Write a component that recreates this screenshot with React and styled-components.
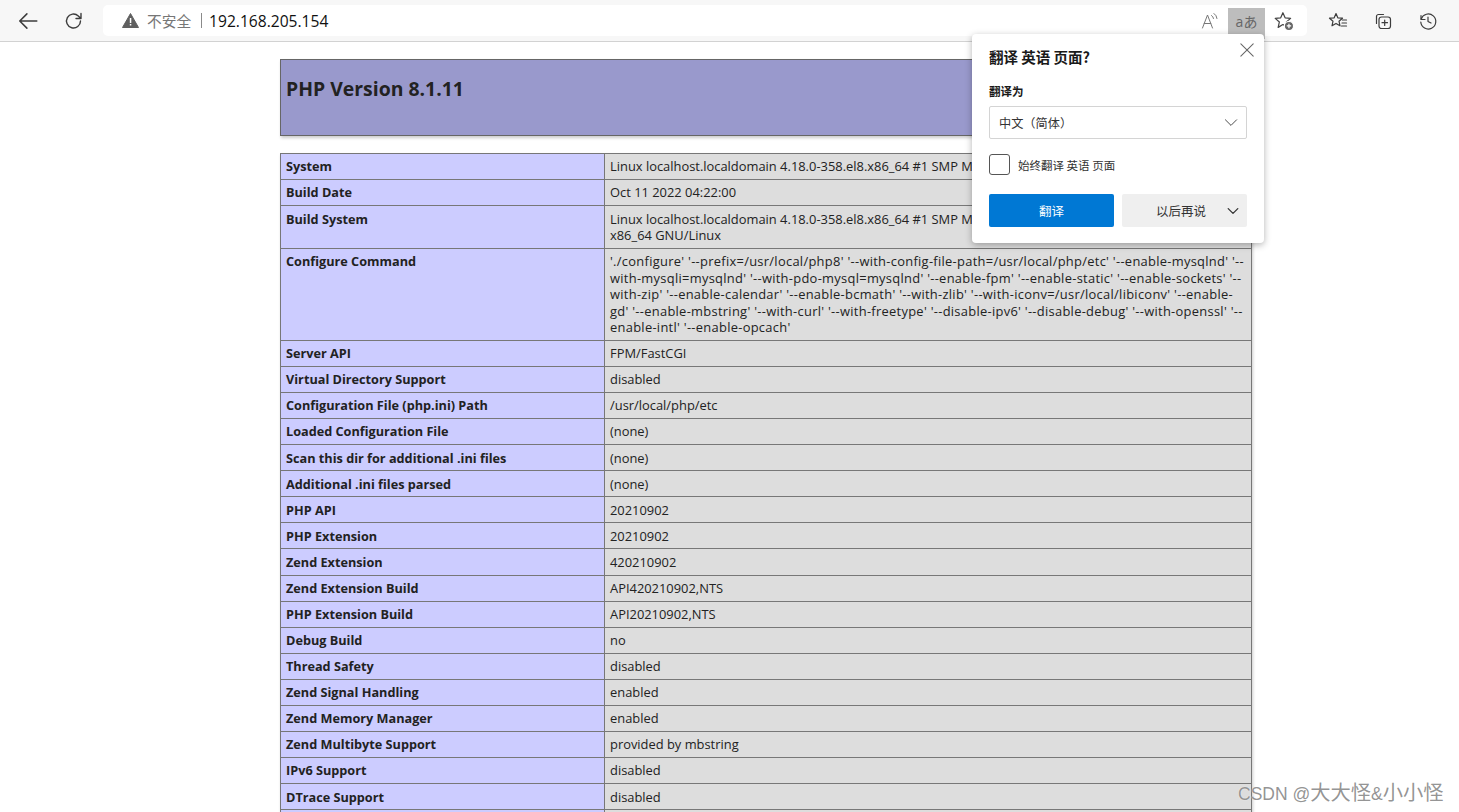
import React from "react";
import styled, { createGlobalStyle } from "styled-components";

const Global = createGlobalStyle`
  html, body { margin: 0; padding: 0; background: #fff; }
  body { font-family: "Open Sans", "Noto Sans CJK SC", sans-serif; overflow: hidden; }
  #root { height: 812px; overflow: hidden; }
`;

const Window = styled.div`
  position: relative;
  width: 1459px;
  height: 812px;
  overflow: hidden;
  background: #fff;
`;

const Toolbar = styled.header`
  height: 41px;
  display: flex;
  align-items: center;
  background: #f7f7f7;
  border-bottom: 1px solid #d2d2d2;
  padding: 0 0 0 17px;
  box-sizing: content-box;
`;

const NavButton = styled.span`
  display: flex;
  width: ${(p) => p.$w || 22}px;
  height: 22px;
  align-items: center;
  justify-content: center;
  margin-right: ${(p) => p.$mr || 0}px;
  color: #3c3c3c;
`;

const Address = styled.div`
  width: 1204px;
  height: 31px;
  margin-right: 20px;
  display: flex;
  align-items: center;
  background: #fff;
  border-radius: 5px;
  padding: 0 5px 0 19px;
  box-sizing: border-box;
`;

const Warn = styled.span`
  display: flex;
  margin-right: 8px;
`;

const Insecure = styled.span`
  font-family: "Noto Sans CJK SC", sans-serif;
  font-size: 14.7px;
  color: #767676;
`;

const Divider = styled.span`
  width: 1px;
  height: 15px;
  background: #8a8a8a;
  margin: 0 7px 0 10px;
`;

const Url = styled.span`
  font-size: 15.6px;
  color: #111;
  flex: 1;
`;

const AddrIcon = styled.span`
  width: 37px;
  height: 31px;
  margin-top: ${(p) => (p.$active ? 6 : 0)}px;
  display: flex;
  align-items: center;
  justify-content: center;
  color: #666;
  background: ${(p) => (p.$active ? "#bdbdbd" : "transparent")};
  font-size: 14px;
  padding-bottom: ${(p) => (p.$active ? 6 : 0)}px;
  box-sizing: border-box;
`;

const Main = styled.main`
  padding: 17px 0 0 280px;
`;

const Banner = styled.div`
  width: 972px;
  height: 77px;
  box-sizing: border-box;
  background: #9999cc;
  border: 1px solid #666;
  box-shadow: 1px 2px 3px #ccc;
  padding: 14px 5px;
  margin-bottom: 17px;
`;

const Title = styled.h1`
  margin: 0;
  font-size: 19.4px;
  line-height: 29px;
  font-weight: 700;
  color: #222;
`;

const InfoTable = styled.table`
  width: 972px;
  table-layout: fixed;
  border-collapse: collapse;
  box-shadow: 1px 2px 3px #ccc;
`;

const Key = styled.td`
  width: 313px;
  background: #ccccff;
  border: 1px solid #777;
  padding: 4.4px 5px 4.2px;
  font-size: 12.7px;
  line-height: 16.5px;
  font-weight: 700;
  color: #222;
  vertical-align: top;
`;

const Val = styled.td`
  background: #dddddd;
  border: 1px solid #777;
  padding: 4.4px 5px 4.2px;
  font-size: 12.9px;
  line-height: 16.5px;
  letter-spacing: ${(p) => (p.$wide ? "0.29px" : "0")};
  color: #222;
  vertical-align: top;
  white-space: nowrap;
  overflow: hidden;
`;

const Popup = styled.section`
  position: absolute;
  left: 972px;
  top: 34px;
  width: 292px;
  height: 209px;
  box-sizing: border-box;
  padding: 13px 17px 0;
  background: #fff;
  border-radius: 4px;
  box-shadow: 0 2px 7px rgba(0, 0, 0, 0.3);
  font-family: "Noto Sans CJK SC", sans-serif;
  color: #1a1a1a;
`;

const Close = styled.span`
  position: absolute;
  right: 7px;
  top: 7px;
  display: flex;
  color: #666;
`;

const PopupTitle = styled.h2`
  margin: 0 0 16px;
  font-size: 14.5px;
  line-height: 20px;
  font-weight: 700;
`;

const FieldLabel = styled.div`
  font-size: 11.5px;
  line-height: 16px;
  font-weight: 700;
  margin-bottom: 7px;
`;

const Select = styled.div`
  height: 33px;
  box-sizing: border-box;
  border: 1px solid #d4d4d4;
  border-radius: 2px;
  display: flex;
  align-items: center;
  justify-content: space-between;
  padding: 0 7px 0 9px;
  font-size: 12.2px;
  color: #333;
  margin-bottom: 15px;
`;

const CheckRow = styled.label`
  display: flex;
  align-items: center;
  gap: 8px;
  font-size: 11.5px;
  color: #333;
  margin-bottom: 19px;
`;

const Box = styled.span`
  width: 21px;
  height: 21px;
  box-sizing: border-box;
  border: 1.5px solid #555;
  border-radius: 3px;
`;

const Actions = styled.div`
  display: flex;
  gap: 8px;
`;

const Primary = styled.button`
  width: 125px;
  height: 33px;
  padding: 0;
  border: 0;
  border-radius: 2px;
  background: #0078d4;
  color: #fff;
  font: 400 12.5px "Noto Sans CJK SC", sans-serif;
`;

const Secondary = styled.button`
  width: 125px;
  height: 33px;
  padding: 0 6px 0 34px;
  border: 0;
  border-radius: 2px;
  background: #efefef;
  color: #333;
  font: 400 12.5px "Noto Sans CJK SC", sans-serif;
  display: flex;
  align-items: center;
  justify-content: space-between;
`;

const Watermark = styled.div`
  position: absolute;
  left: 1238px;
  top: 782px;
  font-family: "Liberation Sans", "Noto Sans CJK SC", sans-serif;
  font-size: 17.5px;
  line-height: 22px;
  color: rgba(120, 120, 120, 0.8);
  text-shadow: 0 0 1px #fff;
  white-space: nowrap;
`;

const Han = styled.span`
  font-size: 20.3px;
`;

const rows = [
  ["System", "Linux localhost.localdomain 4.18.0-358.el8.x86_64 #1 SMP M"],
  ["Build Date", "Oct 11 2022 04:22:00"],
  ["Build System", "Linux localhost.localdomain 4.18.0-358.el8.x86_64 #1 SMP M\nx86_64 GNU/Linux"],
  ["Configure Command", "'./configure' '--prefix=/usr/local/php8' '--with-config-file-path=/usr/local/php/etc' '--enable-mysqlnd' '--\nwith-mysqli=mysqlnd' '--with-pdo-mysql=mysqlnd' '--enable-fpm' '--enable-static' '--enable-sockets' '--\nwith-zip' '--enable-calendar' '--enable-bcmath' '--with-zlib' '--with-iconv=/usr/local/libiconv' '--enable-\ngd' '--enable-mbstring' '--with-curl' '--with-freetype' '--disable-ipv6' '--disable-debug' '--with-openssl' '--\nenable-intl' '--enable-opcach'", true],
  ["Server API", "FPM/FastCGI"],
  ["Virtual Directory Support", "disabled"],
  ["Configuration File (php.ini) Path", "/usr/local/php/etc"],
  ["Loaded Configuration File", "(none)"],
  ["Scan this dir for additional .ini files", "(none)"],
  ["Additional .ini files parsed", "(none)"],
  ["PHP API", "20210902"],
  ["PHP Extension", "20210902"],
  ["Zend Extension", "420210902"],
  ["Zend Extension Build", "API420210902,NTS"],
  ["PHP Extension Build", "API20210902,NTS"],
  ["Debug Build", "no"],
  ["Thread Safety", "disabled"],
  ["Zend Signal Handling", "enabled"],
  ["Zend Memory Manager", "enabled"],
  ["Zend Multibyte Support", "provided by mbstring"],
  ["IPv6 Support", "disabled"],
  ["DTrace Support", "disabled"],
  ["\u00a0", ""],
];

const Svg = ({ s = 20, children, sw = 1.3 }) => (
  <svg width={s} height={s} viewBox="0 0 20 20" fill="none" stroke="currentColor" strokeWidth={sw} strokeLinecap="round" strokeLinejoin="round">
    {children}
  </svg>
);

const StarPath = "M9 2.5l2 4.6 5 .5-3.8 3.3 1.1 4.9L9 13.2l-4.3 2.6 1.1-4.9L2 7.6l5-.5z";

export default function App() {
  return (
    <Window>
      <Global />
      <Toolbar>
        <NavButton $mr={24}>
          <Svg s={22} sw={1.4}><path d="M18 10H2.5M9 3.5L2.5 10 9 16.5" /></Svg>
        </NavButton>
        <NavButton $mr={18}>
          <Svg s={20} sw={1.4}><path d="M16.5 10a7 7 0 1 1-2.2-5.1L17 7.5M17 2.5v5h-5" /></Svg>
        </NavButton>
        <Address>
          <Warn>
            <svg width="17" height="15" viewBox="0 0 17 15">
              <path d="M8.5 0.5L16.5 14.5H0.5z" fill="#606060" stroke="#606060" strokeLinejoin="round" />
              <rect x="7.8" y="5" width="1.5" height="5" fill="#fff" />
              <rect x="7.8" y="11" width="1.5" height="1.5" fill="#fff" />
            </svg>
          </Warn>
          <Insecure>不安全</Insecure>
          <Divider />
          <Url>192.168.205.154</Url>
          <AddrIcon>
            <svg width="20" height="20" viewBox="0 0 20 20" fill="none" stroke="#777" strokeWidth="1" strokeLinecap="round">
              <path d="M2.5 17L7.5 4l5 13M4.2 12.5h6.6" />
              <path d="M11.5 4.5a4 4 0 0 1 2 3M14 2.5a7 7 0 0 1 3 5" />
            </svg>
          </AddrIcon>
          <AddrIcon $active>aあ</AddrIcon>
          <AddrIcon>
            <svg width="22" height="22" viewBox="0 0 20 20" fill="none" stroke="#444" strokeWidth="1.1" strokeLinejoin="round">
              <path d={StarPath} />
              <circle cx="14.5" cy="14.5" r="4.2" fill="#666" stroke="#fff" />
              <path d="M14.5 12.5v4M12.5 14.5h4" stroke="#fff" />
            </svg>
          </AddrIcon>
        </Address>
        <NavButton $mr={23}>
          <Svg s={20} sw={1.2}>
            <path d="M8 2.5l1.8 4.3 4.7.4-3.5 3 1 4.6L8 12.4l-4 2.4 1-4.6-3.5-3 4.7-.4z" />
            <path d="M14.5 9h4M14 12h4.5M13.5 15h5" />
          </Svg>
        </NavButton>
        <NavButton $mr={23}>
          <Svg s={20} sw={1.2}>
            <path d="M3.5 12.5V5.5a2 2 0 0 1 2-2h5" />
            <rect x="6" y="6" width="11.5" height="11.5" rx="2.5" />
            <path d="M11.7 9v5.5M9 11.7h5.5" />
          </Svg>
        </NavButton>
        <NavButton>
          <Svg s={20} sw={1.2}>
            <path d="M3 4.5v4h4" />
            <path d="M3.2 8a7.5 7.5 0 1 1-.4 3" />
            <path d="M10 6v4.5l3 1.5" />
          </Svg>
        </NavButton>
      </Toolbar>
      <Main>
        <Banner>
          <Title>PHP Version 8.1.11</Title>
        </Banner>
        <InfoTable>
          <tbody>
            {rows.map(([k, v, wide], idx) => (
              <tr key={idx}>
                <Key>{k}</Key>
                <Val $wide={wide}>
                  {v.split("\n").map((line, i) => (
                    <div key={i}>{line || "\u00a0"}</div>
                  ))}
                </Val>
              </tr>
            ))}
          </tbody>
        </InfoTable>
      </Main>
      <Popup>
        <Close>
          <Svg s={19} sw={1.1}><path d="M3 3l13 13M16 3L3 16" /></Svg>
        </Close>
        <PopupTitle>翻译 英语 页面?</PopupTitle>
        <FieldLabel>翻译为</FieldLabel>
        <Select>
          <span>中文（简体）</span>
          <Svg s={16} sw={1.1}><path d="M3 6l7 7 7-7" /></Svg>
        </Select>
        <CheckRow>
          <Box />
          始终翻译 英语 页面
        </CheckRow>
        <Actions>
          <Primary>翻译</Primary>
          <Secondary>
            以后再说
            <Svg s={16} sw={1.6}><path d="M4 7l6 6 6-6" /></Svg>
          </Secondary>
        </Actions>
      </Popup>
      <Watermark>CSDN @<Han>大大怪</Han>&amp;<Han>小小怪</Han></Watermark>
    </Window>
  );
}
